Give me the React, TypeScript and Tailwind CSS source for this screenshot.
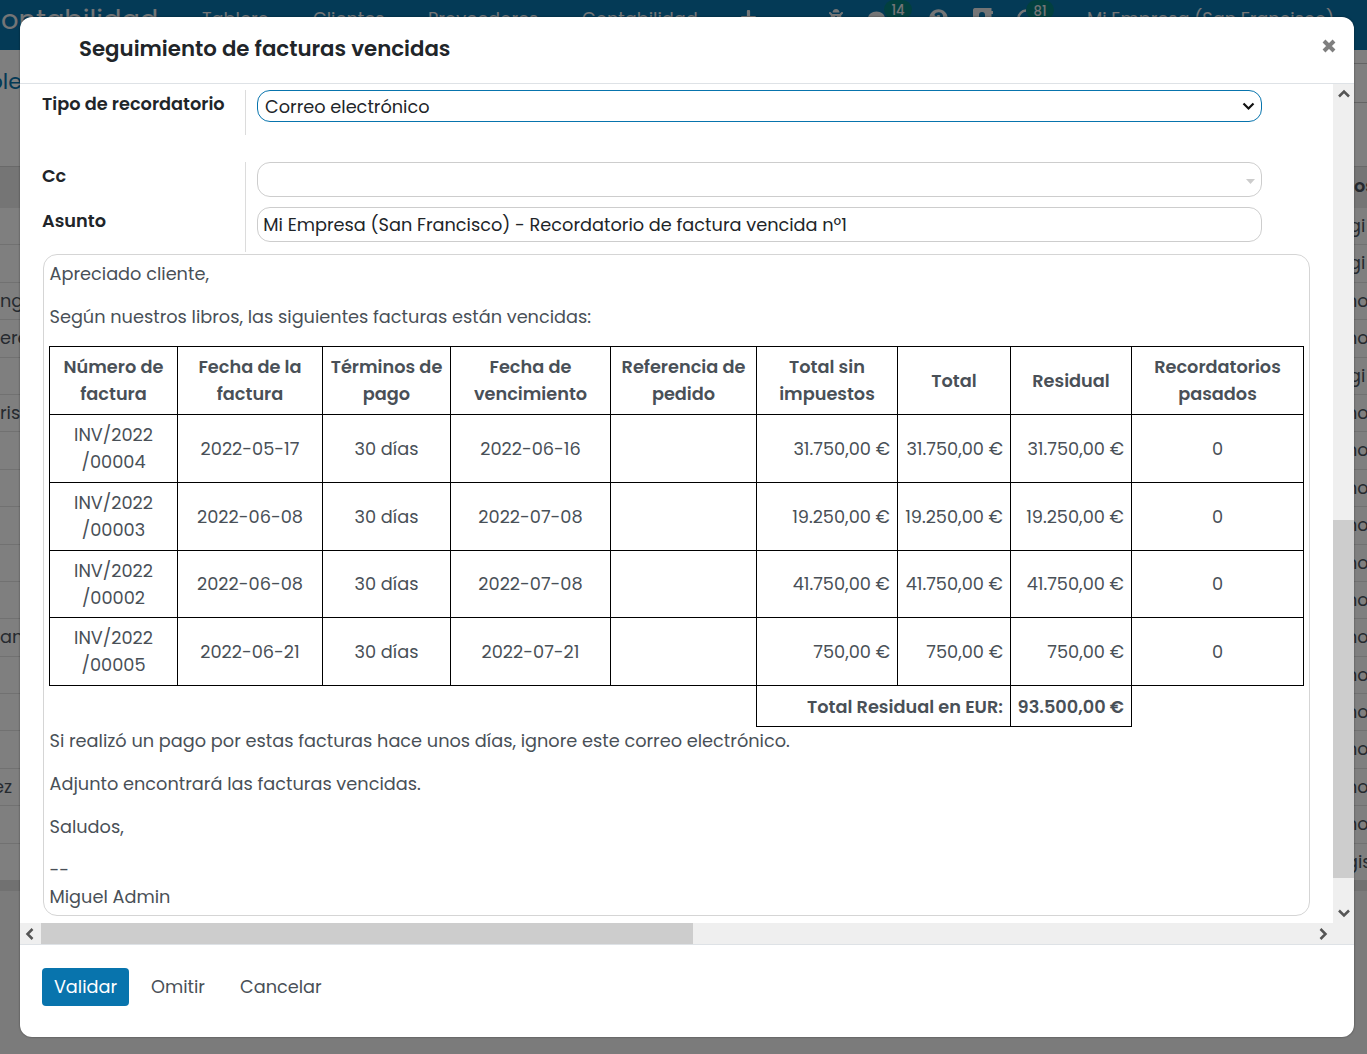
import { FaBug, FaPlus, FaQuestionCircle, FaComment } from "react-icons/fa";

const leftRows = ["", "", "ng", "ere", "", "ris", "", "", "", "", "", "an", "", "", "", "ez", "", ""];
const rightRows = ["gi", "gi", "no", "no", "gi", "no", "no", "no", "no", "no", "no", "no", "no", "no", "no", "no", "no", "gis"];

const rightShift: Record<string, string> = { gi: "-ml-px", no: "-ml-1", gis: "-ml-1" };

function Background() {
  return (
    <div className="flex h-[1054px] w-[1367px] flex-col overflow-hidden bg-[#f7f7f7]">
      <div className="flex h-[50px] shrink-0 items-start whitespace-nowrap bg-[#0874ad] text-[17.73px] leading-[38px] text-[#e8eaec]">
        <div className="w-[202px] pl-px text-[27.3px] leading-[39px]">ontabilidad</div>
        <div className="w-[111px]">Tablero</div>
        <div className="w-[115px]">Clientes</div>
        <div className="w-[154px]">Proveedores</div>
        <div className="w-[159px]">Contabilidad</div>
        <FaPlus className="mt-[9px] h-[17px] w-[15px]" />
        <FaBug className="mt-2 ml-[72px] h-[18px] w-[16px]" />
        <FaComment className="mt-2.5 ml-[24px] h-[18px] w-[17px]" />
        <div className="-ml-px h-[19px] w-7 rounded-full bg-[#04807f] text-center text-[13.2px] font-medium leading-[21px]">14</div>
        <FaQuestionCircle className="mt-[9px] ml-[17px] h-[19px] w-[19px]" />
        <svg viewBox="0 0 20 18" className="mt-2 ml-[25px] h-[18px] w-5 fill-current">
          <path fillRule="evenodd" d="M1.500 0h17v3H20v3h-1.500v12H0V2a2 2 0 0 1 1.500-2zM9 4a3 3 0 0 0-3 3v5h6V7a3 3 0 0 0-3-3z" />
        </svg>
        <svg viewBox="0 0 18 18" className="mt-[9px] ml-[24px] h-[18px] w-[18px] fill-none stroke-current" strokeWidth="2.500">
          <path d="M9 1.500A8 8 0 1 0 17 12" />
        </svg>
        <div className="-ml-[9px] h-5 w-7 rounded-full bg-[#04807f] text-center text-[13.2px] font-medium leading-[24px]">81</div>
        <div className="ml-[33px]">Mi Empresa (San Francisco)</div>
      </div>
      <div className="flex h-[830px] shrink-0 justify-between bg-white text-[17.73px] leading-[36px] text-[#4c5560]">
        <div className="w-6">
          <div className="h-[116px] pt-3 text-[22px] leading-[40px] text-[#0874ad]">
            <div className="-ml-3">ple</div>
          </div>
          <div className="h-[42px] border-t border-[#d2d2d2] bg-[#ebebeb]" />
          {leftRows.map((t, i) => (
            <div key={i} className="h-[37.400px] whitespace-nowrap border-b border-[#e3e3e3]">
              <span className={t === "ez" ? "-ml-[7px]" : ""}>{t}</span>
            </div>
          ))}
        </div>
        <div className="w-[17px]">
          <div className="h-[14px] border-b border-[#c8c8c8]" />
          <div className="h-[39px] border-b border-[#c8c8c8]" />
          <div className="h-[63px]" />
          <div className="h-[42px] border-t border-[#d2d2d2] bg-[#ebebeb] pl-1 font-semibold leading-[38px]">os</div>
          {rightRows.map((t, i) => (
            <div key={i} className="h-[37.400px] whitespace-nowrap border-b border-[#e3e3e3]">
              <span className={rightShift[t]}>{t}</span>
            </div>
          ))}
        </div>
      </div>
      <div className="h-[11px] shrink-0 bg-[#e3e3e3]" />
    </div>
  );
}

const headers: string[][] = [
  ["Número de", "factura"],
  ["Fecha de la", "factura"],
  ["Términos de", "pago"],
  ["Fecha de", "vencimiento"],
  ["Referencia de", "pedido"],
  ["Total sin", "impuestos"],
  ["Total"],
  ["Residual"],
  ["Recordatorios", "pasados"],
];

const invoices = [
  { code: "/00004", date: "2022-05-17", due: "2022-06-16", amount: "31.750,00 €" },
  { code: "/00003", date: "2022-06-08", due: "2022-07-08", amount: "19.250,00 €" },
  { code: "/00002", date: "2022-06-08", due: "2022-07-08", amount: "41.750,00 €" },
  { code: "/00005", date: "2022-06-21", due: "2022-07-21", amount: "750,00 €" },
];

function Cell({ lines, right = false, bold = false }: { lines: string[]; right?: boolean; bold?: boolean }) {
  return (
    <div
      className={`flex flex-col justify-center whitespace-nowrap border-t border-l border-black pt-px leading-[26.6px] ${right ? "items-end pr-[7px]" : "items-center"} ${bold ? "font-semibold" : ""}`}
    >
      {lines.map((t) => (
        <span key={t}>{t}</span>
      ))}
    </div>
  );
}

function InvoiceTable() {
  return (
    <div className="-ml-px w-[1255px]">
      <div className="grid grid-cols-[128px_145px_128px_160px_146px_141px_113px_121px_172px] grid-rows-[68px_68px_68px_67px_68px] border-r border-b border-black">
        {headers.map((h, i) => <Cell key={i} lines={h} bold />)}
        {invoices.map((inv) => [
          <Cell key={inv.code + "a"} lines={["INV/2022", inv.code]} />,
          <Cell key={inv.code + "b"} lines={[inv.date]} />,
          <Cell key={inv.code + "c"} lines={["30 días"]} />,
          <Cell key={inv.code + "d"} lines={[inv.due]} />,
          <Cell key={inv.code + "e"} lines={[]} />,
          <Cell key={inv.code + "f"} lines={[inv.amount]} right />,
          <Cell key={inv.code + "g"} lines={[inv.amount]} right />,
          <Cell key={inv.code + "h"} lines={[inv.amount]} right />,
          <Cell key={inv.code + "i"} lines={["0"]} />,
        ])}
      </div>
      <div className="ml-[707px] grid h-[41px] w-[376px] grid-cols-[253px_121px] grid-rows-[40px] whitespace-nowrap border-r border-b border-l border-black font-semibold leading-[42px]">
        <div className="pr-[7px] text-right">Total Residual en EUR:</div>
        <div className="border-l border-black pr-[7px] text-right">93.500,00 €</div>
      </div>
    </div>
  );
}

function Arrow({ className }: { className: string }) {
  return (
    <svg viewBox="0 0 12 12" className={`h-3 w-3 fill-none stroke-[#555] ${className}`} strokeWidth="2.500">
      <path d="M1 8.500 6 3.500l5 5" />
    </svg>
  );
}

function Modal() {
  return (
    <div className="absolute top-[17px] left-5 flex h-[1020px] w-[1334px] flex-col overflow-hidden rounded-[12px] bg-white shadow-[0_0_2px_rgba(0,0,0,0.5)]">
      <div className="flex h-[67px] shrink-0 items-start justify-between border-b border-[#dee2e6] pt-4 pr-[18px] pl-[59px] text-[21.3px] font-semibold leading-[31px] text-[#212529]">
        <span>Seguimiento de facturas vencidas</span>
        <svg viewBox="0 0 14 14" className="mt-1.5 h-[14px] w-[14px] fill-none stroke-[#7f7f7f]" strokeWidth="4">
          <path d="M2 2l10 10M12 2L2 12" />
        </svg>
      </div>
      <div className="flex h-[839px] shrink-0">
        <div className="w-[1313px] pt-1.5 pl-[22px] text-[17.73px] text-[#495057]">
          <div className="flex h-[45px] text-[#212529]">
            <div className="w-[203px] font-semibold leading-[28px]">Tipo de recordatorio</div>
            <div className="flex border-l border-[#dcdcdc] pl-[11px]">
              <div className="flex h-8 w-[1005px] items-center justify-between rounded-[13px] border border-[#0874ad] pr-[6px] pl-[7px]">
                <span className="pt-0.5">Correo electrónico</span>
                <svg viewBox="0 0 13 9" className="mt-px h-[9px] w-[13px] fill-none stroke-[#111]" strokeWidth="2.200">
                  <path d="M1.500 1.500l5 5 5-5" />
                </svg>
              </div>
            </div>
          </div>
          <div className="mt-[27px] flex h-[90px] text-[#212529]">
            <div className="flex w-[203px] flex-col font-semibold leading-[28px]">
              <div className="h-[45px]">Cc</div>
              <div>Asunto</div>
            </div>
            <div className="flex flex-col gap-2.5 border-l border-[#dcdcdc] pl-[11px]">
              <div className="flex h-[35px] w-[1005px] items-center justify-end rounded-[13px] border border-[#cdcdcd] pt-[3px] pr-1.5">
                <svg viewBox="0 0 9 5" className="h-[5px] w-[9px] fill-[#ccc]"><path d="M0 0h9L4.500 5z" /></svg>
              </div>
              <div className="flex h-[35px] w-[1005px] items-center rounded-[13px] border border-[#cdcdcd] pt-px pl-[5.3px]">
                Mi Empresa (San Francisco) - Recordatorio de factura vencida nº1
              </div>
            </div>
          </div>
          <div className="mt-0.5 ml-px h-[662px] w-[1267px] rounded-[14px] border border-[#d5d5d5] pt-[5px] pl-1.5 leading-[27px]">
            <p className="-ml-[0.5px] mb-4">Apreciado cliente,</p>
            <p className="-ml-[0.5px] mb-4">Según nuestros libros, las siguientes facturas están vencidas:</p>
            <InvoiceTable />
            <p className="-ml-[0.5px] mb-4">Si realizó un pago por estas facturas hace unos días, ignore este correo electrónico.</p>
            <p className="-ml-[0.5px] mb-4">Adjunto encontrará las facturas vencidas.</p>
            <p className="-ml-[0.5px] mb-4">Saludos,</p>
            <p className="-ml-[0.5px]">--</p>
            <p className="-ml-[0.5px]">Miguel Admin</p>
          </div>
        </div>
        <div className="flex w-[21px] flex-col items-center bg-[#efefef]">
          <Arrow className="mt-1" />
          <div className="mt-[420px] h-[358px] w-[21px] bg-[#cdcdcd]" />
          <Arrow className="mt-[29px] rotate-180" />
        </div>
      </div>
      <div className="flex h-[22px] shrink-0 items-center border-b border-[#dee2e6] bg-[#efefef]">
        <Arrow className="ml-1 -rotate-90" />
        <div className="ml-[5px] h-[21px] w-[652px] bg-[#cdcdcd]" />
        <Arrow className="ml-[624px] rotate-90" />
      </div>
      <div className="flex pt-[23px] pl-[22px] text-[17.73px] leading-[38px] text-[#495057]">
        <button className="h-[38px] w-[87px] rounded-[4px] bg-[#0874ad] text-white">Validar</button>
        <button className="ml-[22px]">Omitir</button>
        <button className="ml-[35px]">Cancelar</button>
      </div>
    </div>
  );
}

export default function App() {
  return (
    <div className="relative h-[1054px] w-[1367px] overflow-hidden font-[Poppins,Inter,sans-serif]">
      <Background />
      <div className="absolute inset-0 bg-black/50" />
      <Modal />
    </div>
  );
}
